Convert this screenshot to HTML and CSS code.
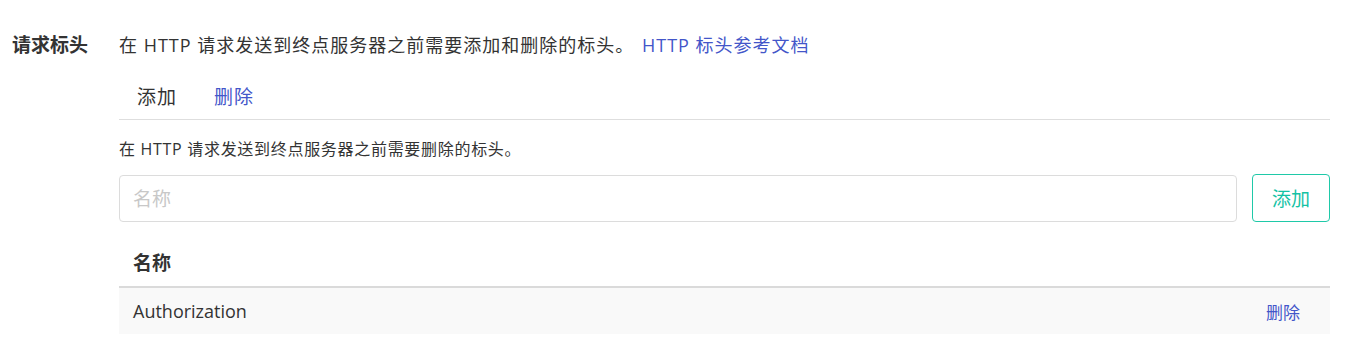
FILE: index.html
```html
<!DOCTYPE html>
<html lang="zh-CN">
<head>
<meta charset="utf-8">
<link rel="stylesheet" href="styles.css">
</head>
<body>
<div class="field">
  <div class="field-label">请求标头</div>
  <div class="field-body">
    <div class="intro">在 HTTP 请求发送到终点服务器之前需要添加和删除的标头。 <a class="link" href="#">HTTP 标头参考文档</a></div>
    <div class="tabs">
      <span class="tab">添加</span>
      <span class="tab tab-active">删除</span>
    </div>
    <div class="hint">在 HTTP 请求发送到终点服务器之前需要删除的标头。</div>
    <div class="add-row">
      <input class="name-input" type="text" placeholder="名称">
      <button class="add-btn">添加</button>
    </div>
    <div class="table">
      <div class="thead">名称</div>
      <div class="trow">
        <span class="cell-name">Authorization</span>
        <a class="del" href="#">删除</a>
      </div>
    </div>
  </div>
</div>
</body>
</html>
```
FILE: styles.css
```css
html, body {
  margin: 0;
  padding: 0;
  background: #fff;
}
body {
  font-family: "Open Sans", "Noto Sans CJK SC", sans-serif;
  color: #333;
}
.field {
  display: flex;
  padding: 32px 15px 0 12px;
}
.field-label {
  width: 107px;
  flex: none;
  font-size: 19px;
  font-weight: 700;
  line-height: 26px;
  color: #333;
}
.field-body {
  flex: 1;
}
.intro {
  font-size: 18px;
  line-height: 26px;
  letter-spacing: 1px;
}
.link {
  color: #4356c9;
  text-decoration: none;
  margin-left: 2px;
}
.tabs {
  display: flex;
  gap: 37px;
  padding: 26px 0 0 18px;
  height: 62px;
  box-sizing: border-box;
  border-bottom: 1px solid #dedede;
  font-size: 19px;
  line-height: 26px;
  letter-spacing: 1px;
}
.tab-active {
  color: #4356c9;
}
.hint {
  font-size: 16px;
  line-height: 20px;
  margin-top: 19px;
  letter-spacing: 0.7px;
}
.add-row {
  display: flex;
  gap: 15px;
  margin-top: 15px;
}
.name-input {
  flex: 1;
  height: 47px;
  box-sizing: border-box;
  border: 1px solid #dcdcdc;
  border-radius: 4px;
  padding: 0 13px;
  font-family: "Open Sans", "Noto Sans CJK SC", sans-serif;
  font-size: 19px;
  color: #333;
  outline: none;
  margin-top: 1px;
}
.name-input::placeholder {
  color: #c8c8c8;
}
.add-btn {
  width: 78px;
  height: 48px;
  box-sizing: border-box;
  border: 1px solid #1fc9a8;
  border-radius: 4px;
  background: #fff;
  color: #14c2a4;
  font-family: "Open Sans", "Noto Sans CJK SC", sans-serif;
  font-size: 19px;
  padding: 0;
}
.table {
  margin-top: 19px;
}
.thead {
  font-size: 19px;
  font-weight: 700;
  line-height: 26px;
  padding: 9px 14px 10px;
  border-bottom: 2px solid #dadada;
}
.trow {
  display: flex;
  justify-content: space-between;
  align-items: center;
  height: 46px;
  padding: 0 30px 0 14px;
  background: #f9f9f9;
}
.cell-name {
  font-size: 18px;
}
.del {
  color: #4356c9;
  text-decoration: none;
  font-size: 17px;
}
```
